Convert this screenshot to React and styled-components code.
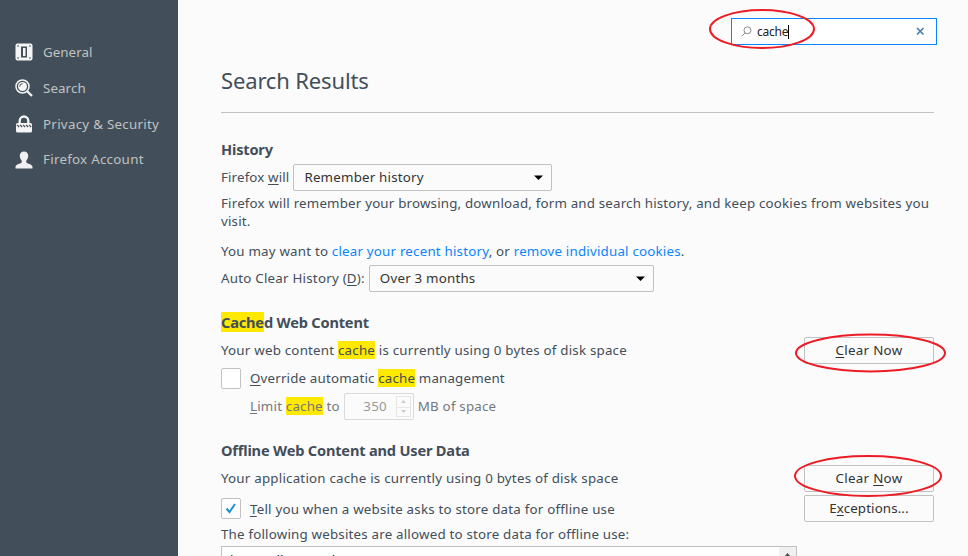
import React from "react";
import styled, { createGlobalStyle } from "styled-components";

const Global = createGlobalStyle`
  * { box-sizing: border-box; }
  body {
    margin: 0;
    overflow: hidden;
    background: #fbfbfb;
    color: #424e5a;
    font: 13.33px/18px "Noto Sans", "Open Sans", sans-serif;
  }
`;

const Page = styled.div`
  position: relative;
  display: flex;
  width: 968px;
  height: 556px;
  overflow: hidden;
`;

const Sidebar = styled.nav`
  flex: none;
  width: 178px;
  padding-top: 34px;
  background: #424f5a;
`;

const Category = styled.a`
  display: flex;
  align-items: center;
  gap: 10px;
  height: 36px;
  padding-left: 15px;
  color: #c1c1c1;
  letter-spacing: ${(p) => p.$ls || 0}px;
  white-space: nowrap;
`;

const Icon = styled.svg`
  flex: none;
  display: block;
`;

const Main = styled.main`
  flex: none;
  width: 759px;
  padding: 18px 0 0 43px;
`;

const SearchRow = styled.div`
  display: flex;
  justify-content: flex-end;
`;

const SearchBox = styled.div`
  display: flex;
  align-items: center;
  width: 206px;
  height: 27px;
  padding: 0 11px 0 9px;
  border: 1px solid #0a84ff;
  background: #fff;
  color: #222;
  font-size: 12px;
`;

const Query = styled.span`
  flex: 1;
  display: flex;
  align-items: center;
  margin-left: 5px;
  letter-spacing: -0.25px;
`;

const Caret = styled.i`
  width: 1px;
  height: 14px;
  background: #000;
`;

const Content = styled.div`
  width: 713px;
`;

const Title = styled.h1`
  height: 68px;
  margin: 0;
  padding-top: 19px;
  border-bottom: 1px solid #c1c1c1;
  font-size: 22px;
  font-weight: 400;
  line-height: 33px;
  letter-spacing: -0.15px;
`;

const Heading = styled.h2`
  margin: ${(p) => p.$mt}px 0 0;
  font-size: 14.6px;
  font-weight: 700;
  line-height: 20px;
  letter-spacing: -0.19px;
  white-space: nowrap;
`;

const Line = styled.div`
  display: flex;
  align-items: center;
  height: ${(p) => p.$h}px;
  margin-top: ${(p) => p.$mt || 0}px;
  padding-left: ${(p) => p.$indent || 0}px;
  color: ${(p) => (p.$disabled ? "#74777b" : "inherit")};
`;

const Text = styled.span`
  padding-bottom: ${(p) => (p.$low ? 0 : 2)}px;
  letter-spacing: ${(p) => p.$ls || 0.2}px;
  white-space: nowrap;
`;

const Para = styled.p`
  margin: ${(p) => p.$mt}px 0 0;
  letter-spacing: ${(p) => p.$ls || 0.2}px;
  white-space: nowrap;
`;

const Key = styled.span`
  text-decoration: underline;
  text-underline-offset: 2px;
  text-decoration-thickness: 1px;
  text-decoration-skip-ink: none;
`;

const Mark = styled.mark`
  background: #ffe900;
  color: inherit;
`;

const Link = styled.a`
  color: #0a84ff;
`;

const Select = styled.div`
  display: flex;
  align-items: center;
  justify-content: space-between;
  width: ${(p) => p.$w}px;
  height: 27px;
  margin-left: 4px;
  padding: 0 8px 0 10px;
  border: 1px solid #c1c1c1;
  border-radius: 2px;
  background: #fbfbfb;
  color: #333;
`;

const Button = styled.button`
  width: 130px;
  height: 27px;
  margin: 0 0 0 auto;
  padding: 0 0 1px;
  border: 1px solid #c1c1c1;
  border-radius: 2px;
  background: #fbfbfb;
  color: #333;
  font: inherit;
  letter-spacing: ${(p) => p.$ls || 0.3}px;
`;

const Checkbox = styled.span`
  display: grid;
  place-items: center;
  flex: none;
  width: 20px;
  height: 21px;
  margin-right: 9px;
  border: 1px solid #c1c1c1;
  border-radius: 2px;
  background: #fff;
`;

const NumberBox = styled.span`
  display: flex;
  align-items: center;
  justify-content: flex-end;
  width: 70px;
  height: 27px;
  margin: 0 4px;
  padding-right: 2px;
  border: 1px solid #dadada;
  border-radius: 2px;
  color: #999;
`;

const Spinner = styled.span`
  display: grid;
  grid-template-rows: 1fr 1fr;
  width: 15px;
  height: 21px;
  margin-left: 9px;
  border: 1px solid #e6e6e6;
`;

const Step = styled.span`
  display: grid;
  place-items: center;
  & + & { border-top: 1px solid #e6e6e6; }
`;

const SiteList = styled.div`
  display: flex;
  justify-content: space-between;
  width: 576px;
  height: 60px;
  margin-top: 3px;
  border: 1px solid #c1c1c1;
  background: #fff;
  color: #222;
`;

const SiteName = styled.span`
  padding: 4px 0 0 8px;
`;

const ScrollTrack = styled.span`
  width: 17px;
  padding: 6px 0 0 5px;
  background: #f0f0f0;
`;

const Annotations = styled.svg`
  position: absolute;
  inset: 0;
  pointer-events: none;
`;

const Arrow = () => (
  <Icon width="9" height="5" viewBox="0 0 9 5"><path d="M0 .5h9L4.500 5z" fill="#000" /></Icon>
);

export default function App() {
  return (
    <>
      <Global />
      <Page>
        <Sidebar>
          <Category $ls={0.05}>
            <Icon width="18" height="18" viewBox="0 0 18 18">
              <rect x="0.5" y="0.5" width="17" height="17" rx="2" fill="#f5f5f5" />
              <path d="M6 3.500h6v11H6z" fill="#424f5a" />
              <path d="M8 5h2.500v8H8z" fill="#f5f5f5" />
              <g fill="#78828a"><circle cx="3" cy="3" r="0.900" /><circle cx="15" cy="3" r="0.900" /><circle cx="3" cy="15" r="0.900" /><circle cx="15" cy="15" r="0.900" /></g>
            </Icon>
            General
          </Category>
          <Category $ls={0.1}>
            <Icon width="18" height="18" viewBox="0 0 18 18">
              <circle cx="7.500" cy="7.500" r="6.500" fill="none" stroke="#f5f5f5" strokeWidth="1.500" />
              <circle cx="7.500" cy="7.500" r="4.500" fill="#f5f5f5" />
              <path d="M4.700 7.700a3 3 0 0 1 3-3" fill="none" stroke="#424f5a" strokeWidth="1" />
              <path d="M12 12l5 5" stroke="#f5f5f5" strokeWidth="2.200" />
            </Icon>
            Search
          </Category>
          <Category $ls={0.28}>
            <Icon width="18" height="18" viewBox="0 0 18 18">
              <path d="M4.700 9V5.800a4.300 4.300 0 0 1 8.600 0V9" fill="none" stroke="#f5f5f5" strokeWidth="2.300" />
              <rect x="1" y="8" width="16" height="9.500" rx="1.500" fill="#f5f5f5" />
              <path d="M2 9.800l2.200 2.200M5 9.800l2.200 2.200M8 9.800l2.200 2.200M11 9.800l2.200 2.200M14 9.800l2.200 2.200" stroke="#424f5a" strokeWidth="1.200" />
            </Icon>
            Privacy &amp; Security
          </Category>
          <Category $ls={0.27}>
            <Icon width="18" height="18" viewBox="0 0 18 18">
              <path d="M9 .5c2.600 0 4.200 1.700 4.200 4.300 0 2-.8 3.800-2 4.900v1.500c.6 1.500 6.300 1.800 6.300 4.800V17.500H.5V16c0-3 5.700-3.300 6.300-4.800V9.700c-1.200-1.100-2-2.900-2-4.900C4.800 2.200 6.400.5 9 .5z" fill="#f0f0f0" />
            </Icon>
            <Text $ls={0.27}>Firefox Account</Text>
          </Category>
        </Sidebar>
        <Main>
          <SearchRow>
            <SearchBox>
              <Icon width="11" height="11" viewBox="0 0 11 11" fill="none" stroke="#8a8a8a">
                <circle cx="6.500" cy="4.300" r="3.500" /><path d="M4 7L.7 10.200" />
              </Icon>
              <Query>cache<Caret /></Query>
              <Icon width="9" height="9" viewBox="0 0 9 9"><path d="M1 1l6.500 6.500M7.500 1L1 7.500" stroke="#4a7fb5" strokeWidth="1.700" /></Icon>
            </SearchBox>
          </SearchRow>
          <Content>
            <Title>Search Results</Title>
            <Heading $mt={26}>History</Heading>
            <Line $h={27} $mt={5}>
              <Text $ls={0.13}>Firefox <Key>w</Key>ill</Text>
              <Select $w={259}><Text>Remember history</Text><Arrow /></Select>
            </Line>
            <Para $mt={3} $ls={0.182}>Firefox will remember your browsing, download, form and search history, and keep cookies from websites you<br />visit.</Para>
            <Para $mt={12}>You may want to <Link>clear your recent history</Link>, or <Link>remove individual cookies</Link>.</Para>
            <Line $h={27} $mt={5}>
              <Text $ls={0.23}>Auto Clear History (<Key>D</Key>):</Text>
              <Select $w={285}><Text>Over 3 months</Text><Arrow /></Select>
            </Line>
            <Heading $mt={20}><Mark>Cache</Mark>d Web Content</Heading>
            <Line $h={27} $mt={5}>
              <Text $ls={0.215}>Your web content <Mark>cache</Mark> is currently using 0 bytes of disk space</Text>
              <Button><Key>C</Key>lear Now</Button>
            </Line>
            <Line $h={21} $mt={4}>
              <Checkbox />
              <Text $ls={0.17}><Key>O</Key>verride automatic <Mark>cache</Mark> management</Text>
            </Line>
            <Line $h={27} $mt={4} $indent={29} $disabled>
              <Text><Key>L</Key>imit <Mark>cache</Mark> to</Text>
              <NumberBox><Text>350</Text><Spinner>
                <Step><Icon width="5" height="3" viewBox="0 0 5 3"><path d="M0 3h5L2.500 0z" fill="#ccc" /></Icon></Step>
                <Step><Icon width="5" height="3" viewBox="0 0 5 3"><path d="M0 0h5L2.500 3z" fill="#ccc" /></Icon></Step>
              </Spinner></NumberBox>
              <Text>MB of space</Text>
            </Line>
            <Heading $mt={20}>Offline Web Content and User Data</Heading>
            <Line $h={27} $mt={5}>
              <Text $ls={0.215}>Your application cache is currently using 0 bytes of disk space</Text>
              <Button>Clear <Key>N</Key>ow</Button>
            </Line>
            <Line $h={27} $mt={3}>
              <Checkbox><Icon width="12" height="11" viewBox="0 0 12 11"><path d="M1.500 5.500l3 3.500L10 1" fill="none" stroke="#1e8fd5" strokeWidth="2" /></Icon></Checkbox>
              <Text $low $ls={0.21}><Key>T</Key>ell you when a website asks to store data for offline use</Text>
              <Button $ls={0.12}>E<Key>x</Key>ceptions...</Button>
            </Line>
            <Para $mt={3}>The following websites are allowed to store data for offline use:</Para>
            <SiteList><SiteName>bonusallwarmed</SiteName><ScrollTrack><Icon width="7" height="4" viewBox="0 0 7 4"><path d="M0 4h7L3.500 0z" fill="#505050" /></Icon></ScrollTrack></SiteList>
          </Content>
        </Main>
        <Annotations width="968" height="556" viewBox="0 0 968 556" fill="none" stroke="#ed1c24" strokeWidth="2">
          <ellipse cx="762" cy="29" rx="52" ry="19" />
          <ellipse cx="870.500" cy="353" rx="74.500" ry="18.500" />
          <ellipse cx="868" cy="476" rx="73" ry="20" />
        </Annotations>
      </Page>
    </>
  );
}
